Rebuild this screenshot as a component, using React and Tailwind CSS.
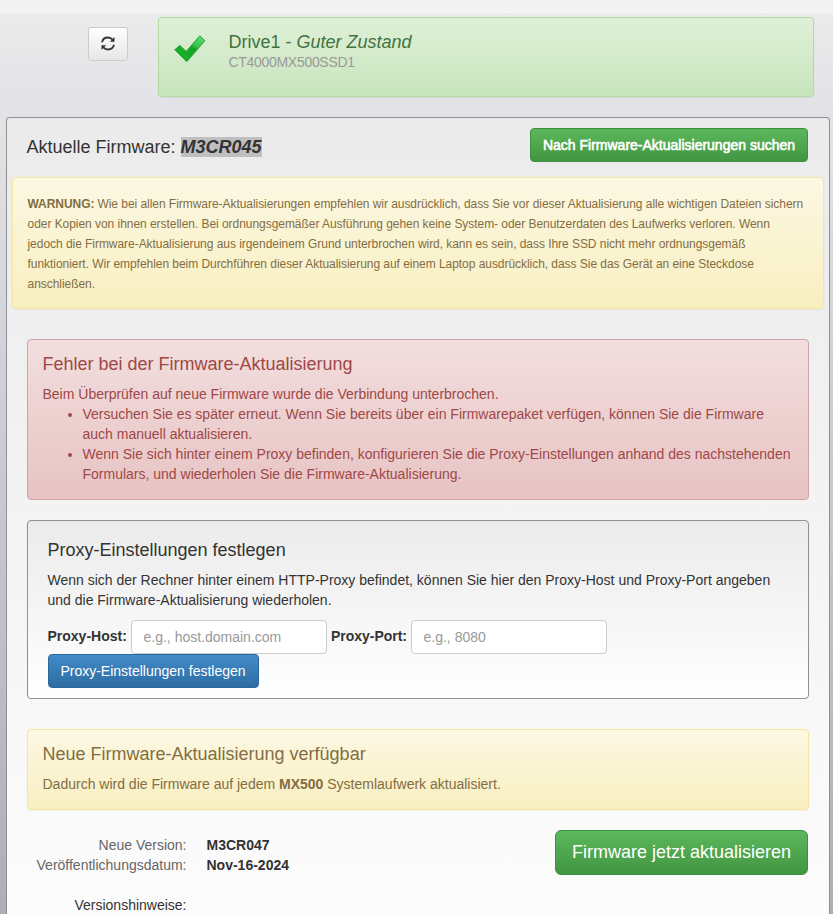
import React, { useState } from 'react';

const warningLines = [
  'oder Kopien von ihnen erstellen. Bei ordnungsgemäßer Ausführung gehen keine System- oder Benutzerdaten des Laufwerks verloren. Wenn',
  'jedoch die Firmware-Aktualisierung aus irgendeinem Grund unterbrochen wird, kann es sein, dass Ihre SSD nicht mehr ordnungsgemäß',
  'funktioniert. Wir empfehlen beim Durchführen dieser Aktualisierung auf einem Laptop ausdrücklich, dass Sie das Gerät an eine Steckdose',
  'anschließen.'
];

const errorHints = [
  'Versuchen Sie es später erneut. Wenn Sie bereits über ein Firmwarepaket verfügen, können Sie die Firmware auch manuell aktualisieren.',
  'Wenn Sie sich hinter einem Proxy befinden, konfigurieren Sie die Proxy-Einstellungen anhand des nachstehenden Formulars, und wiederholen Sie die Firmware-Aktualisierung.'
];

const RefreshIcon = () => (
  <svg width="14" height="15" viewBox="0 0 14 15" fill="none" stroke="#333" strokeWidth="1.8">
    <path d="M1 6.200C1.700 3.200 4.100 1.500 6.900 1.500c1.900 0 3.600.8 4.800 2.300" />
    <path d="M13 8.800c-.7 3-3.100 4.700-5.900 4.700-1.900 0-3.600-.8-4.800-2.300" />
    <path d="M13.500 1v4.700H8.900z" fill="#333" stroke="none" />
    <path d="M.5 14V9.300h4.600z" fill="#333" stroke="none" />
  </svg>
);

const CheckIcon = () => (
  <svg width="32" height="28" viewBox="0 0 32 28">
    <defs>
      <linearGradient id="check" x1="1" y1="0" x2="0.3" y2="1">
        <stop offset="0" stopColor="#5fe07a" />
        <stop offset="0.4" stopColor="#35c648" />
        <stop offset="0.5" stopColor="#14a322" />
        <stop offset="1" stopColor="#12b82a" />
      </linearGradient>
    </defs>
    <path
      d="M.8 14.800L5.800 10.400l6.400 6L25.800.800l5 5L12.800 26.700z"
      fill="url(#check)"
      stroke="#2f9a3c"
      strokeWidth="1"
      strokeLinejoin="round"
    />
  </svg>
);

const ProxyForm = () => {
  const [host, setHost] = useState('');
  const [port, setPort] = useState('');

  return (
    <div className="mx-5 mt-5 h-[179px] rounded border border-[#8f8f93] bg-gradient-to-b from-[#ebebeb] to-white pt-[19px] pr-5 pl-[19.5px]">
      <h4 className="text-[18px] leading-5">Proxy-Einstellungen festlegen</h4>
      <p className="mt-[10px]">
        Wenn sich der Rechner hinter einem HTTP-Proxy befindet, können Sie hier den Proxy-Host und Proxy-Port angeben und die Firmware-Aktualisierung wiederholen.
      </p>
      <div className="mt-[10px] flex items-center">
        <label className="w-[83.5px] pb-[2px] font-bold">Proxy-Host:</label>
        <input
          value={host}
          onChange={(e) => setHost(e.target.value)}
          placeholder="e.g., host.domain.com"
          className="h-[34px] w-[196px] rounded border border-[#ccc] bg-white px-[11.5px] placeholder:text-[#999]"
        />
        <label className="w-[84px] pb-[2px] pl-1 font-bold tracking-[-0.03px]">Proxy-Port:</label>
        <input
          value={port}
          onChange={(e) => setPort(e.target.value)}
          placeholder="e.g., 8080"
          className="h-[34px] w-[196px] rounded border border-[#ccc] bg-white px-[11.5px] placeholder:text-[#999]"
        />
      </div>
      <button className="ml-[0.5px] block h-[34px] w-[211px] rounded border border-[#2b669a] bg-gradient-to-b from-[#428bca] to-[#2d6ca2] pr-px text-white">
        Proxy-Einstellungen festlegen
      </button>
    </div>
  );
};

const App = () => {
  return (
    <div className="flex h-[914px] w-[833px] flex-col overflow-hidden bg-[#f3f3f3] pt-[13px] font-['Liberation_Sans',Arial,sans-serif] text-[14px] leading-5 text-[#333]">
      <div className="flex min-h-0 flex-1 flex-col bg-gradient-to-b from-[#ebebeb] via-[#d0d1d6] via-40% to-[#acafb3]">
        {/* Drive row */}
        <div className="flex h-[104px] shrink-0 items-start bg-gradient-to-b from-[#ebebeb] to-[#e1e2e6] pt-1">
          <button className="mt-[10px] ml-[88px] flex h-[34px] w-10 items-center justify-center rounded-[3px] border border-[#ccc] bg-gradient-to-b from-white to-[#e6e6e6] pb-[2px]">
            <RefreshIcon />
          </button>
          <div className="ml-[30px] flex h-[80px] w-[656px] rounded border border-[#b2dba1] bg-gradient-to-b from-[#dff0d8] to-[#c8e5bc] shadow-[0_1px_2px_rgba(0,0,0,0.05)]">
            <div className="mt-[17px] ml-[15px] w-[54.5px]">
              <CheckIcon />
            </div>
            <div className="pt-[14px]">
              <h4 className="text-[18px] leading-5 text-[#41733f]">
                Drive1 - <em>Guter Zustand</em>
              </h4>
              <div className="tracking-[-0.3px] text-[#999]">CT4000MX500SSD1</div>
            </div>
          </div>
        </div>

        {/* Firmware panel */}
        <div className="ml-[6px] min-h-0 w-[824px] flex-1 rounded-t border border-b-0 border-[#8f8f96] bg-gradient-to-b from-[#ebebeb] to-[#fcfcfc]">
          <div className="flex h-[59px] items-start justify-between pt-[10px] pr-[21px] pl-[19.5px]">
            <h4 className="mt-[9px] text-[18px] leading-5">
              Aktuelle Firmware: <em className="bg-[#bfbfbf] font-bold">M3CR045</em>
            </h4>
            <button className="h-[34px] w-[278px] rounded border border-[#3e8f3e] bg-gradient-to-b from-[#5cb85c] to-[#419641] whitespace-nowrap text-white [-webkit-text-stroke:0.6px_white]">
              Nach Firmware-Aktualisierungen suchen
            </button>
          </div>

          <div className="mx-[5px] h-[132px] rounded border border-[#f5e79e] bg-gradient-to-b from-[#fcf8e3] to-[#f8efc0] py-[15.5px] pl-[14.5px] text-[12px] tracking-[-0.045px] whitespace-nowrap text-[#846d42] shadow-[0_1px_2px_rgba(0,0,0,0.05)]">
            <div className="flex gap-[3px]">
              <strong>WARNUNG:</strong>
              <span>
                Wie bei allen Firmware-Aktualisierungen empfehlen wir ausdrücklich, dass Sie vor dieser Aktualisierung alle wichtigen Dateien sichern
              </span>
            </div>
            {warningLines.map((line) => (
              <div key={line}>{line}</div>
            ))}
          </div>

          <div className="mx-5 mt-[30px] h-[161px] rounded border border-[#cfa3a5] bg-gradient-to-b from-[#f2dede] to-[#e7c3c3] px-[14.5px] pt-[14px] text-[#a04747]">
            <h4 className="text-[18px] leading-5">Fehler bei der Firmware-Aktualisierung</h4>
            <p className="mt-[10px]">Beim Überprüfen auf neue Firmware wurde die Verbindung unterbrochen.</p>
            <ul className="list-disc pl-10">
              {errorHints.map((hint) => (
                <li key={hint}>{hint}</li>
              ))}
            </ul>
          </div>

          <ProxyForm />

          <div className="mx-5 mt-[30px] h-[81px] rounded border border-[#f5e79e] bg-gradient-to-b from-[#fcf8e3] to-[#f8efc0] pt-[14px] pl-[14.5px] text-[#846d42] shadow-[0_1px_2px_rgba(0,0,0,0.05)]">
            <h4 className="text-[18px] leading-5">Neue Firmware-Aktualisierung verfügbar</h4>
            <p className="mt-[10px]">
              Dadurch wird die Firmware auf jedem <strong>MX500</strong> Systemlaufwerk aktualisiert.
            </p>
          </div>

          {/* Release details */}
          <div className="mt-5 flex items-start justify-between pr-[21px] pl-5">
            <dl className="grid grid-cols-[159.5px_auto] gap-x-5 pt-[5px]">
              <dt className="text-right text-[#666]">Neue Version:</dt>
              <dd className="font-bold">M3CR047</dd>
              <dt className="text-right text-[#666]">Veröffentlichungsdatum:</dt>
              <dd className="font-bold">Nov-16-2024</dd>
              <dt className="pt-5 text-right">Versionshinweise:</dt>
              <dd />
            </dl>
            <button className="h-[45px] w-[253px] rounded-md border border-[#3e8f3e] bg-gradient-to-b from-[#5cb85c] to-[#419641] pb-[2px] text-[18px] text-white">
              Firmware jetzt aktualisieren
            </button>
          </div>
        </div>
      </div>
    </div>
  );
};

export default App;
